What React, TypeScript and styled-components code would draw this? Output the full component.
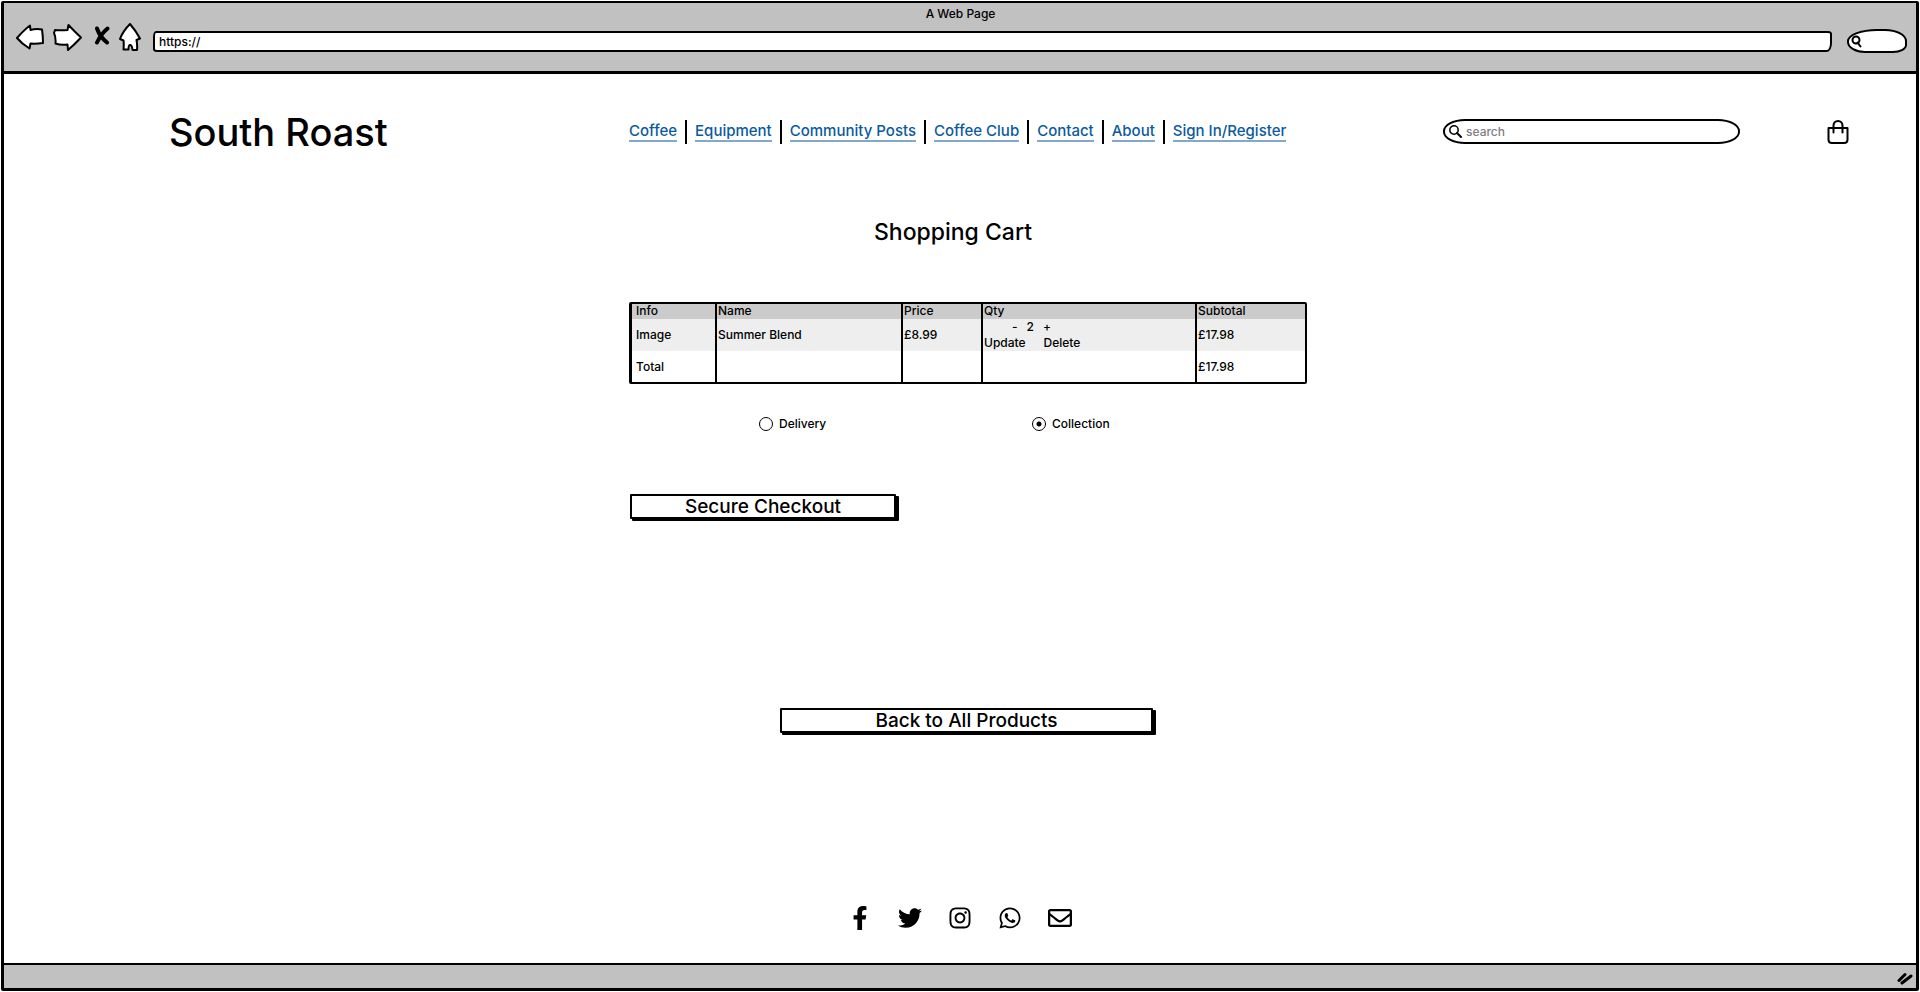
import React, { useState } from "react";
import styled, { createGlobalStyle } from "styled-components";
import {
  FaFacebookF,
  FaTwitter,
  FaInstagram,
  FaWhatsapp,
  FaRegEnvelope,
} from "react-icons/fa";

const INK = "#000";
const CHROME = "#c1c1c1";
const LINK = "#0a5aa0";

const GlobalStyle = createGlobalStyle`
  * { box-sizing: border-box; }
  body {
    margin: 0;
    background: #fff;
    color: ${INK};
    font-family: Inter, "Liberation Sans", sans-serif;
    font-size: 12px;
    line-height: 16px;
    font-weight: 500;
  }
  button, input { font: inherit; color: inherit; }
`;

const Frame = styled.div`
  display: flex;
  flex-direction: column;
  min-height: calc(100vh - 2px);
  margin: 1px;
  border: 3px solid ${INK};
  border-top-width: 2px;
  border-radius: 2px;
`;

const Chrome = styled.header`
  height: 71px;
  padding: 3px 9px 0 12px;
  background: ${CHROME};
  border-bottom: 3px solid ${INK};
`;

const WindowTitle = styled.div`
  padding-right: 2px;
  text-align: center;
`;

const Toolbar = styled.div`
  display: flex;
  align-items: flex-end;
  height: 31px;
`;

const NavButton = styled.button<{ $gap: number }>`
  display: flex;
  margin: 0 ${(p) => p.$gap}px 0 0;
  padding: 0 0 2px;
  border: 0;
  background: none;
  cursor: pointer;

  svg {
    fill: #fff;
    stroke: ${INK};
    stroke-width: 2;
    stroke-linejoin: round;
    stroke-linecap: round;
  }
`;

const AddressGroup = styled.div`
  flex: 1;
  display: flex;
  align-items: center;
  gap: 15px;
  min-width: 0;
`;

const UrlInput = styled.input`
  flex: 1;
  min-width: 0;
  height: 21px;
  padding: 0 4px;
  background: #fff;
  border: 2px solid ${INK};
  border-radius: 3px 4px 5px 4px / 6px 3px 9px 3px;
  outline: 0;
`;

const QuickSearch = styled.label`
  display: flex;
  align-items: center;
  width: 60px;
  height: 24px;
  padding: 0 2px;
  background: #fff;
  border: 2px solid ${INK};
  border-radius: 30px 22px 14px 18px / 12px 12px 8px 11px;

  svg { flex: none; }
  input {
    width: 100%;
    min-width: 0;
    height: 16px;
    padding: 0;
    border: 0;
    background: none;
    outline: 0;
  }
`;

const SiteHeader = styled.div`
  display: grid;
  grid-template-columns: 165fr 460fr 814fr 384fr 89fr;
  align-items: center;
  height: 115px;
`;

const Brand = styled.h1`
  grid-column: 2;
  margin: 0;
  font-size: 38px;
  line-height: 48px;
  font-weight: 500;
  white-space: nowrap;
`;

const SiteNav = styled.nav`
  display: flex;
  align-items: center;
  font-size: 15px;
  line-height: 18px;
  white-space: nowrap;
`;

const NavLink = styled.a`
  color: ${LINK};
  text-decoration: none;
  border-bottom: 2px solid #82a9cd;
`;

const NavItem = styled.div`
  display: flex;
  align-items: center;
  height: 24px;

  & + & {
    margin-left: 8px;
    padding-left: 8px;
    border-left: 2px solid ${INK};
  }
`;

const SearchBox = styled.label`
  display: flex;
  align-items: center;
  gap: 4px;
  width: 297px;
  max-width: 90%;
  height: 25px;
  padding: 0 4px;
  border: 2px solid ${INK};
  border-radius: 22px / 12px;

  svg { flex: none; }
  input {
    flex: 1;
    min-width: 0;
    padding: 0;
    border: 0;
    background: none;
    outline: 0;
  }
  input::placeholder { color: #7d7d87; opacity: 1; }
`;

const BagLink = styled.a`
  display: flex;
  color: ${INK};
`;

const Main = styled.main`
  flex: 1;
  display: grid;
  grid-template-columns: 625fr minmax(678px, auto) 609fr;
  align-content: start;
`;

const Content = styled.div`
  grid-column: 2;
  display: flex;
  flex-direction: column;
`;

const PageTitle = styled.h2`
  margin: 27px 0 0;
  padding-right: 30px;
  font-size: 23px;
  line-height: 32px;
  font-weight: 500;
  text-align: center;
`;

const CartTable = styled.table`
  width: 678px;
  margin-top: 54px;
  table-layout: fixed;
  border-collapse: separate;
  border-spacing: 0;
  border: 2px solid ${INK};
  border-left-width: 3px;
  border-radius: 2px;
  text-align: left;

  th, td {
    padding: 0 0 0 1px;
    font-weight: 500;
    vertical-align: middle;
  }
  th { line-height: 14px; padding-bottom: 1px; }
  th + th, td + td { border-left: 2px solid ${INK}; }
  th:first-child, td:first-child { padding-left: 4px; }
`;

const HeadRow = styled.tr`
  height: 15px;
  background: #cbcbcb;
`;

const BodyRow = styled.tr<{ $shaded?: boolean }>`
  height: ${(p) => (p.$shaded ? 32 : 31)}px;
  background: ${(p) => (p.$shaded ? "#eee" : "#fff")};
`;

const Stepper = styled.div`
  display: flex;
  gap: 9px;
  padding-left: 28px;
`;

const RowActions = styled.div`
  display: flex;
  gap: 18px;
`;

const TextButton = styled.button`
  padding: 0;
  border: 0;
  background: none;
  cursor: pointer;
`;

const Options = styled.fieldset`
  display: grid;
  grid-template-columns: 273px 1fr;
  margin: 32px 0 0;
  padding: 0 0 0 130px;
  border: 0;
`;

const Option = styled.label`
  display: flex;
  align-items: center;
  gap: 6px;
`;

const Radio = styled.input`
  appearance: none;
  width: 14px;
  height: 14px;
  margin: 0;
  border: 1px solid ${INK};
  border-radius: 50%;

  &:checked {
    background: radial-gradient(circle, ${INK} 2px, transparent 3px);
  }
`;

const SketchButton = styled.button<{ $wide?: boolean }>`
  width: ${(p) => (p.$wide ? 373 : 266)}px;
  height: 25px;
  padding: 0;
  background: #fff;
  border: 2px solid ${INK};
  border-radius: 1px;
  box-shadow: 2px 2px 0 ${INK}, 3px 2px 0 ${INK};
  font-size: 19px;
  line-height: 20px;
  cursor: pointer;
`;

const CheckoutRow = styled.div`
  margin-top: 62px;
  padding-left: 1px;
`;

const BackRow = styled.div`
  display: flex;
  justify-content: center;
  margin-top: 189px;
  padding-right: 3px;
`;

const Socials = styled.footer`
  display: flex;
  justify-content: center;
  gap: 26px;
  padding-bottom: 33px;

  a { display: flex; color: ${INK}; }
`;

const StatusBar = styled.div`
  display: flex;
  align-items: flex-end;
  justify-content: flex-end;
  height: 25px;
  padding: 0 3px 3px 0;
  background: ${CHROME};
  border-top: 2px solid ${INK};
`;

const navLinks = [
  "Coffee",
  "Equipment",
  "Community Posts",
  "Coffee Club",
  "Contact",
  "About",
  "Sign In/Register",
];

const socials = [
  { name: "Facebook", Icon: FaFacebookF },
  { name: "Twitter", Icon: FaTwitter },
  { name: "Instagram", Icon: FaInstagram },
  { name: "WhatsApp", Icon: FaWhatsapp },
  { name: "Email", Icon: FaRegEnvelope },
];

const PRICE = 8.99;
const money = (n: number) => `£${n.toFixed(2)}`;

function BrowserChrome() {
  return (
    <Chrome>
      <WindowTitle>A Web Page</WindowTitle>
      <Toolbar>
        <NavButton $gap={9} aria-label="Back">
          <svg width="28" height="28" viewBox="0 0 28 28">
            <path d="M1 15 Q8 7 14 2.500 L14.500 7 Q20 5.500 26 6.500 Q27 13 27 20 Q20 21 14.500 20.500 L13.500 25.500 Q6 21 1 15 Z" />
          </svg>
        </NavButton>
        <NavButton $gap={12} aria-label="Forward">
          <svg width="29" height="28" viewBox="0 0 29 28">
            <path d="M2 7 Q8 7.500 14.500 7 L15.500 2 Q22 9 28 14.500 Q21 22 15 27 L14.500 21.500 Q8 22.500 2.500 20.500 Q3 14 1 10 Z" />
          </svg>
        </NavButton>
        <NavButton $gap={9} aria-label="Stop">
          <svg width="16" height="28" viewBox="0 0 16 28">
            <path
              d="M3 5.500 Q6 14 13 19.500 M13.500 5.500 Q7 11 3 19.500"
              style={{ fill: "none", strokeWidth: 4 }}
            />
          </svg>
        </NavButton>
        <NavButton $gap={12} aria-label="Home">
          <svg width="22" height="28" viewBox="0 0 22 28">
            <path d="M11 1 Q17 8 21 15.500 L17.500 17 Q18.500 22 18 27 L13.500 27 Q13 22 11 22 Q9.500 22 9.500 26.500 L4.500 26.500 Q5 21 4.500 17.500 L1 16 Q4 8 11 1 Z" />
          </svg>
        </NavButton>
        <AddressGroup>
          <UrlInput aria-label="Address" defaultValue="https://" />
          <QuickSearch>
            <svg width="11" height="13" viewBox="0 0 11 13" fill="none" stroke={INK} strokeWidth="2">
              <circle cx="5" cy="5" r="3.500" />
              <path d="M6.500 7.500 L9.500 11.500" strokeLinecap="round" />
            </svg>
            <input aria-label="Browser search" />
          </QuickSearch>
        </AddressGroup>
      </Toolbar>
    </Chrome>
  );
}

export default function App() {
  const [qty, setQty] = useState(2);
  const total = money(PRICE * qty);

  return (
    <Frame>
      <GlobalStyle />
      <BrowserChrome />
      <SiteHeader>
        <Brand>South Roast</Brand>
        <SiteNav>
          {navLinks.map((label) => (
            <NavItem key={label}>
              <NavLink href="#">{label}</NavLink>
            </NavItem>
          ))}
        </SiteNav>
        <SearchBox>
          <svg width="13" height="13" viewBox="0 0 13 13" fill="none" stroke={INK} strokeWidth="2">
            <circle cx="5" cy="5" r="4.200" strokeWidth="1.500" />
            <path d="M8 8 L12 12" strokeLinecap="round" />
          </svg>
          <input placeholder="search" aria-label="Search products" />
        </SearchBox>
        <BagLink href="#" aria-label="Basket">
          <svg
            width="22"
            height="24"
            viewBox="0 0 22 24"
            fill="none"
            stroke="currentColor"
            strokeWidth="2"
            strokeLinecap="round"
          >
            <path d="M1.500 8 H20.500 V19.500 Q20.500 23 17 23 H5 Q1.500 23 1.500 19.500 Z" strokeLinejoin="round" />
            <path d="M6.500 12.500 V5.500 A4.500 4.500 0 0 1 15.500 5.500 V12.500" />
          </svg>
        </BagLink>
      </SiteHeader>
      <Main>
        <Content>
          <PageTitle>Shopping Cart</PageTitle>
          <CartTable>
            <colgroup>
              <col width="83" />
              <col width="186" />
              <col width="80" />
              <col width="214" />
              <col />
            </colgroup>
            <thead>
              <HeadRow>
                <th scope="col">Info</th>
                <th scope="col">Name</th>
                <th scope="col">Price</th>
                <th scope="col">Qty</th>
                <th scope="col">Subtotal</th>
              </HeadRow>
            </thead>
            <tbody>
              <BodyRow $shaded>
                <td>Image</td>
                <td>Summer Blend</td>
                <td>{money(PRICE)}</td>
                <td>
                  <Stepper>
                    <TextButton aria-label="Decrease" onClick={() => setQty(Math.max(0, qty - 1))}>
                      -
                    </TextButton>
                    <output>{qty}</output>
                    <TextButton aria-label="Increase" onClick={() => setQty(qty + 1)}>
                      +
                    </TextButton>
                  </Stepper>
                  <RowActions>
                    <TextButton>Update</TextButton>
                    <TextButton>Delete</TextButton>
                  </RowActions>
                </td>
                <td>{total}</td>
              </BodyRow>
              <BodyRow>
                <td>Total</td>
                <td />
                <td />
                <td />
                <td>{total}</td>
              </BodyRow>
            </tbody>
          </CartTable>
          <Options aria-label="Fulfilment">
            <Option>
              <Radio type="radio" name="fulfilment" value="delivery" />
              Delivery
            </Option>
            <Option>
              <Radio type="radio" name="fulfilment" value="collection" defaultChecked />
              Collection
            </Option>
          </Options>
          <CheckoutRow>
            <SketchButton>Secure Checkout</SketchButton>
          </CheckoutRow>
          <BackRow>
            <SketchButton $wide>Back to All Products</SketchButton>
          </BackRow>
        </Content>
      </Main>
      <Socials>
        {socials.map(({ name, Icon }) => (
          <a key={name} href="#" aria-label={name}>
            <Icon size={24} />
          </a>
        ))}
      </Socials>
      <StatusBar>
        <svg width="16" height="13" viewBox="0 0 16 13" stroke={INK} strokeWidth="3" strokeLinecap="round">
          <path d="M2 8.500 L8 2.500 M5 11 L14 4" />
        </svg>
      </StatusBar>
    </Frame>
  );
}
